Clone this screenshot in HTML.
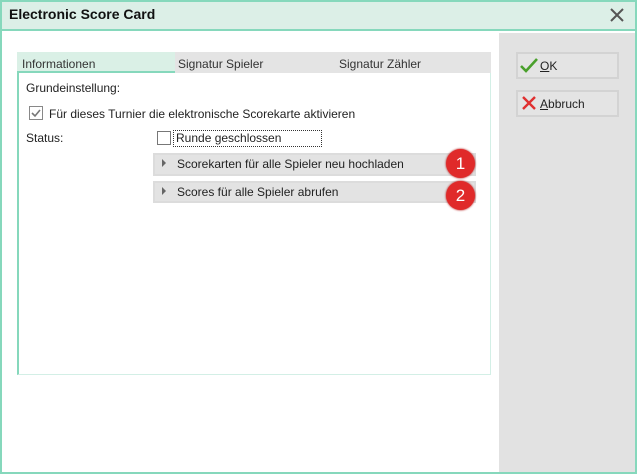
<!DOCTYPE html>
<html><head><style>
*{margin:0;padding:0;box-sizing:border-box}
body{width:637px;height:474px;position:relative;overflow:hidden;background:#fff;font-family:"Liberation Sans","DejaVu Sans",sans-serif;font-size:12px;color:#222}
.a{position:absolute}
</style></head><body>
<div class="a" style="left:0;top:0;width:637px;height:474px;border:2px solid #86d8bc"></div>
<div class="a" style="left:2px;top:2px;width:633px;height:29px;background:#dcefe7;border-bottom:2px solid #86d8bc"></div>
<div class="a" style="left:9px;top:6px;font-size:14px;font-weight:bold;color:#111">Electronic Score Card</div>
<svg class="a" style="left:609px;top:7px" width="16" height="16"><path d="M2 2L14 14M14 2L2 14" stroke="#555" stroke-width="2"/></svg>
<div class="a" style="left:499px;top:33px;width:136px;height:439px;background:#e2e2e2"></div>
<!-- tabs -->
<div class="a" style="left:17px;top:52px;width:474px;height:21px;background:#e4e4e4"></div>
<div class="a" style="left:17px;top:52px;width:158px;height:21px;background:#daf0e6;border-bottom:2px solid #86d8bc"></div>
<div class="a" style="left:22px;top:57px;color:#333">Informationen</div>
<div class="a" style="left:178px;top:57px;color:#333">Signatur Spieler</div>
<div class="a" style="left:339px;top:57px;color:#333">Signatur Zähler</div>
<div class="a" style="left:17px;top:73px;width:474px;height:302px;border:1px solid #d3efe6;border-left:2px solid #86d8bc;border-top:none"></div>
<div class="a" style="left:26px;top:81px">Grundeinstellung:</div>
<svg class="a" style="left:29px;top:106px" width="14" height="14"><rect x=".5" y=".5" width="13" height="13" fill="#fff" stroke="#888"/><path d="M3 7l3 3 5-6" stroke="#777" stroke-width="1.6" fill="none"/></svg>
<div class="a" style="left:49px;top:107px">Für dieses Turnier die elektronische Scorekarte aktivieren</div>
<div class="a" style="left:26px;top:131px">Status:</div>
<div class="a" style="left:157px;top:131px;width:14px;height:14px;border:1px solid #777;background:#fff"></div>
<div class="a" style="left:173px;top:130px;width:149px;height:17px;border:1px dotted #333"></div>
<div class="a" style="left:176px;top:131px">Runde geschlossen</div>
<div class="a" style="left:153px;top:153px;width:323px;height:23px;background:#e3e3e3;border:2px solid #dcdcdc"></div>
<div class="a" style="left:162px;top:159px;width:0;height:0;border-left:4px solid #666;border-top:4px solid transparent;border-bottom:4px solid transparent"></div>
<div class="a" style="left:177px;top:157px">Scorekarten für alle Spieler neu hochladen</div>
<div class="a" style="left:153px;top:181px;width:323px;height:22px;background:#e3e3e3;border:2px solid #dcdcdc"></div>
<div class="a" style="left:162px;top:187px;width:0;height:0;border-left:4px solid #666;border-top:4px solid transparent;border-bottom:4px solid transparent"></div>
<div class="a" style="left:177px;top:185px">Scores für alle Spieler abrufen</div>
<div class="a" style="left:446px;top:149px;width:29px;height:29px;border-radius:50%;background:#e02a2a;box-shadow:0 0 2px #a00;color:#fff;font-size:17px;text-align:center;line-height:29px">1</div>
<div class="a" style="left:446px;top:181px;width:29px;height:29px;border-radius:50%;background:#e02a2a;box-shadow:0 0 2px #a00;color:#fff;font-size:17px;text-align:center;line-height:29px">2</div>
<!-- buttons -->
<div class="a" style="left:516px;top:52px;width:103px;height:27px;border:2px solid #d3d3d3;background:#e4e4e4"></div>
<svg class="a" style="left:520px;top:57px" width="18" height="16"><path d="M1 9l5 5 11-12" stroke="#4aa02c" stroke-width="2.6" fill="none"/></svg>
<div class="a" style="left:540px;top:59px"><u>O</u>K</div>
<div class="a" style="left:516px;top:90px;width:103px;height:27px;border:2px solid #d3d3d3;background:#e4e4e4"></div>
<svg class="a" style="left:521px;top:95px" width="16" height="16"><path d="M2 2L14 14M14 2L2 14" stroke="#e03030" stroke-width="2.4"/></svg>
<div class="a" style="left:540px;top:97px"><u>A</u>bbruch</div>
</body></html>
